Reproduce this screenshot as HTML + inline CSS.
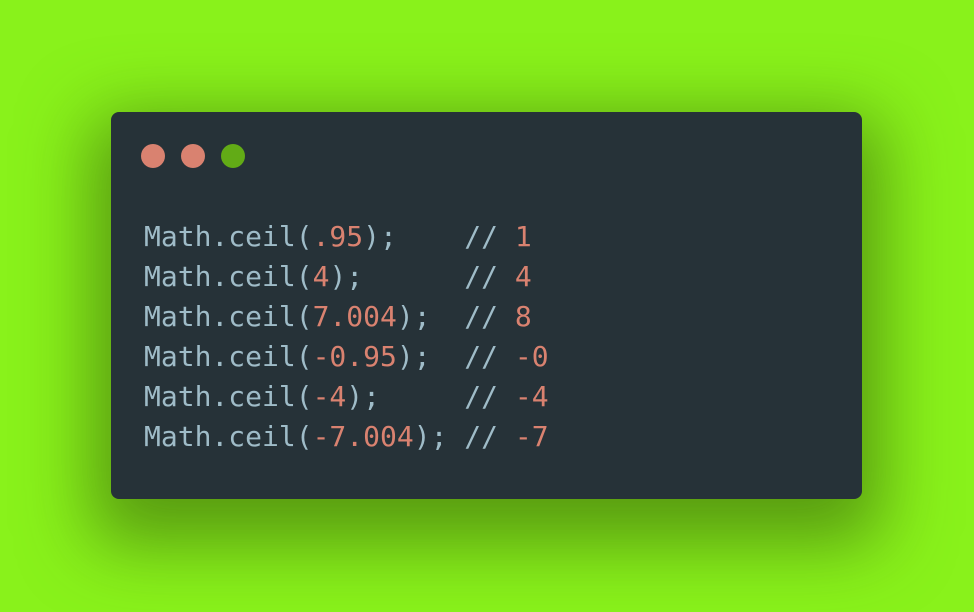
<!DOCTYPE html>
<html><head><style>
html,body{margin:0;padding:0;width:974px;height:612px;overflow:hidden;background:#89f21b;}
.card{position:absolute;left:111px;top:112px;width:751px;height:387px;background:#263238;border-radius:8px;box-shadow:0 25px 70px 20px rgba(80,140,15,0.85);}
.dot{position:absolute;top:144px;width:24px;height:24px;border-radius:50%;}
pre{position:absolute;left:144px;top:217px;margin:0;font-family:"DejaVu Sans Mono","Liberation Mono",monospace;font-size:28px;line-height:40px;color:#9fbcc8;}
.n{color:#d98270}
.c{color:#9fbcc8}
</style></head><body>
<div class="card"></div>
<div class="dot" style="left:141px;background:#d98270"></div>
<div class="dot" style="left:181px;background:#d98270"></div>
<div class="dot" style="left:221px;background:#62ab16"></div>
<pre>Math.ceil(<span class="n">.95</span>);    // <span class="n">1</span>
Math.ceil(<span class="n">4</span>);      // <span class="n">4</span>
Math.ceil(<span class="n">7.004</span>);  // <span class="n">8</span>
Math.ceil(<span class="n">-0.95</span>);  // <span class="n">-0</span>
Math.ceil(<span class="n">-4</span>);     // <span class="n">-4</span>
Math.ceil(<span class="n">-7.004</span>); // <span class="n">-7</span></pre>
</body></html>
